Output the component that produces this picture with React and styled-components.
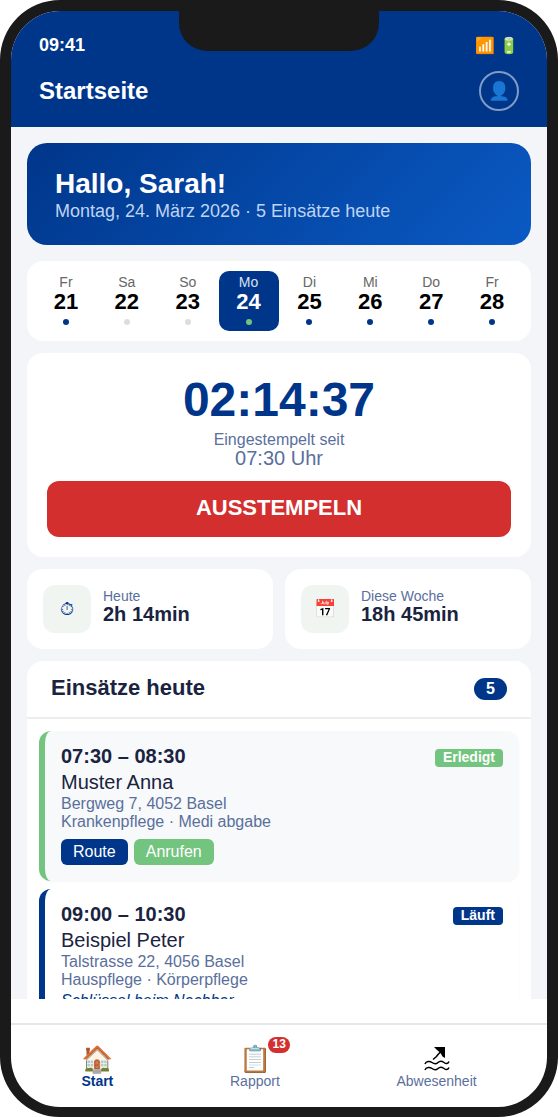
import styled, { createGlobalStyle } from "styled-components";

const tage = [
  { tag: "Fr", nummer: 21, punkt: "#00368a" },
  { tag: "Sa", nummer: 22, punkt: "#dddddd" },
  { tag: "So", nummer: 23, punkt: "#dddddd" },
  { tag: "Mo", nummer: 24, punkt: "#72c47e", aktiv: true },
  { tag: "Di", nummer: 25, punkt: "#00368a" },
  { tag: "Mi", nummer: 26, punkt: "#00368a" },
  { tag: "Do", nummer: 27, punkt: "#00368a" },
  { tag: "Fr", nummer: 28, punkt: "#00368a" },
];

const einsaetze = [
  {
    zeit: "07:30 – 08:30",
    name: "Muster Anna",
    adresse: "Bergweg 7, 4052 Basel",
    leistung: "Krankenpflege · Medi abgabe",
    status: "Erledigt",
    farbe: "#72c47e",
    fertig: true,
  },
  {
    zeit: "09:00 – 10:30",
    name: "Beispiel Peter",
    adresse: "Talstrasse 22, 4056 Basel",
    leistung: "Hauspflege · Körperpflege",
    notiz: "Schlüssel beim Nachbar",
    status: "Läuft",
    farbe: "#00368a",
  },
];

function StrandIcon() {
  return (
    <svg width="26" height="24" viewBox="0 0 26 24" fill="none" aria-hidden="true">
      <path d="M10 0H21V11L18.5 9.5L16.5 6L12.5 2.5Z" fill="#000000" />
      <path d="M17 4.5L14 7.5L12.5 9.5L9 12.5" stroke="#000000" strokeWidth="1.5" />
      <path
        d="M1 17C2 14 6 14 8 15.5S12 17.5 14 15.5S18 14 20 15.5S24 17 25 14.5M1 23C2 20 6 20 8 21.5S12 23.5 14 21.5S18 20 20 21.5S24 23 25 20.5"
        stroke="#000000"
        strokeWidth="1.5"
      />
    </svg>
  );
}

function Einsatz({ einsatz }) {
  return (
    <EinsatzKarte $farbe={einsatz.farbe} $fertig={einsatz.fertig}>
      <EinsatzKopf>
        <Zeit>{einsatz.zeit}</Zeit>
        <Status $farbe={einsatz.farbe}>{einsatz.status}</Status>
      </EinsatzKopf>
      <Name>{einsatz.name}</Name>
      <Detail>{einsatz.adresse}</Detail>
      <Detail>{einsatz.leistung}</Detail>
      {einsatz.notiz && <Notiz>{einsatz.notiz}</Notiz>}
      <Aktionen>
        <Aktion $farbe="#00368a">Route</Aktion>
        <Aktion $farbe="#72c47e">Anrufen</Aktion>
      </Aktionen>
    </EinsatzKarte>
  );
}

export default function App() {
  return (
    <>
      <GlobalStyle />
      <Telefon>
        <Notch />
        <Kopf>
          <StatusLeiste>
            <span>09:41</span>
            <Signale>📶 🔋</Signale>
          </StatusLeiste>
          <TitelZeile>
            <Titel>Startseite</Titel>
            <Avatar aria-label="Profil">👤</Avatar>
          </TitelZeile>
        </Kopf>

        <Inhalt>
          <Begruessung>
            <Hallo>Hallo, Sarah!</Hallo>
            <Datum>Montag, 24. März 2026 · 5 Einsätze heute</Datum>
          </Begruessung>

          <Woche>
            {tage.map((t) => (
              <Tag key={t.nummer} $aktiv={t.aktiv}>
                <TagName $aktiv={t.aktiv}>{t.tag}</TagName>
                <TagNummer>{t.nummer}</TagNummer>
                <Punkt $farbe={t.punkt} />
              </Tag>
            ))}
          </Woche>

          <Stempeluhr>
            <Timer>02:14:37</Timer>
            <Seit>Eingestempelt seit</Seit>
            <SeitZeit>07:30 Uhr</SeitZeit>
            <Ausstempeln>AUSSTEMPELN</Ausstempeln>
          </Stempeluhr>

          <Statistik>
            <StatKarte>
              <StatIcon>⏱</StatIcon>
              <div>
                <StatLabel>Heute</StatLabel>
                <StatWert>2h 14min</StatWert>
              </div>
            </StatKarte>
            <StatKarte>
              <StatIcon>📅</StatIcon>
              <div>
                <StatLabel>Diese Woche</StatLabel>
                <StatWert>18h 45min</StatWert>
              </div>
            </StatKarte>
          </Statistik>

          <Liste>
            <ListenKopf>
              <ListenTitel>Einsätze heute</ListenTitel>
              <Anzahl>5</Anzahl>
            </ListenKopf>
            <ListenInhalt>
              {einsaetze.map((e) => (
                <Einsatz key={e.zeit} einsatz={e} />
              ))}
            </ListenInhalt>
          </Liste>
        </Inhalt>

        <Navigation>
          <NavLink href="#start" $aktiv>
            <NavIcon>🏠</NavIcon>
            Start
          </NavLink>
          <NavLink href="#rapport">
            <NavIcon>📋</NavIcon>
            Rapport
            <NavBadge>13</NavBadge>
          </NavLink>
          <NavLink href="#abwesenheit">
            <NavIcon>
              <StrandIcon />
            </NavIcon>
            Abwesenheit
          </NavLink>
        </Navigation>
      </Telefon>
    </>
  );
}

const GlobalStyle = createGlobalStyle`
  * {
    box-sizing: border-box;
  }
  body {
    margin: 0;
    background: #ffffff;
    font-family: "Liberation Sans", Arial, sans-serif;
  }
  h1, h2, h3, p {
    margin: 0;
  }
  button {
    font-family: inherit;
    border: none;
    padding: 0;
    cursor: pointer;
  }
`;

const Telefon = styled.div`
  position: relative;
  display: flex;
  flex-direction: column;
  height: 100vh;
  border: 11px solid #1a1a1a;
  border-bottom-width: 10px;
  border-radius: 60px;
  background: #ffffff;
  overflow: hidden;
`;

const Notch = styled.div`
  position: absolute;
  top: 0;
  left: 50%;
  width: 200px;
  height: 40px;
  margin-left: -100px;
  background: #1a1a1a;
  border-radius: 0 0 28px 28px;
`;

const Kopf = styled.header`
  flex-shrink: 0;
  padding: 24px 28px 16px;
  background: #00368a;
  color: #ffffff;
`;

const StatusLeiste = styled.div`
  display: flex;
  justify-content: space-between;
  align-items: center;
  height: 20px;
  margin-bottom: 16px;
  font-size: 18px;
  font-weight: 700;
`;

const Signale = styled.span`
  font-size: 16px;
`;

const TitelZeile = styled.div`
  display: flex;
  justify-content: space-between;
  align-items: center;
`;

const Titel = styled.h1`
  font-size: 24px;
  line-height: 28px;
`;

const Avatar = styled.button`
  display: flex;
  align-items: center;
  justify-content: center;
  width: 40px;
  height: 40px;
  border: 2px solid #809bc5;
  border-radius: 50%;
  background: transparent;
  font-size: 18px;
`;

const Inhalt = styled.main`
  flex: 1;
  min-height: 0;
  padding: 16px;
  background: #f3f5f9;
  overflow-y: auto;
  scrollbar-width: none;
`;

const Begruessung = styled.section`
  padding: 24px 28px;
  margin-bottom: 16px;
  border-radius: 20px;
  background: linear-gradient(135deg, #00368a, #0a5ac4);
  color: #ffffff;
`;

const Hallo = styled.h2`
  font-size: 28px;
  line-height: 34px;
`;

const Datum = styled.p`
  font-size: 18px;
  line-height: 20px;
  color: #bfd4f2;
`;

const Woche = styled.section`
  display: flex;
  gap: 1px;
  padding: 10px 9px;
  margin-bottom: 12px;
  border-radius: 16px;
  background: #ffffff;
`;

const Tag = styled.button`
  flex: 1;
  display: flex;
  flex-direction: column;
  align-items: center;
  height: 60px;
  padding-top: 3px;
  border-radius: 10px;
  background: ${(props) => (props.$aktiv ? "#00368a" : "transparent")};
  color: ${(props) => (props.$aktiv ? "#ffffff" : "#000000")};
`;

const TagName = styled.span`
  font-size: 14px;
  line-height: 16px;
  color: ${(props) => (props.$aktiv ? "#d9e2f0" : "#666666")};
`;

const TagNummer = styled.span`
  font-size: 22px;
  line-height: 24px;
  font-weight: 700;
`;

const Punkt = styled.span`
  width: 6px;
  height: 6px;
  margin-top: 5px;
  border-radius: 50%;
  background: ${(props) => props.$farbe};
`;

const Stempeluhr = styled.section`
  display: flex;
  flex-direction: column;
  align-items: center;
  padding: 20px;
  margin-bottom: 12px;
  border-radius: 16px;
  background: #ffffff;
  color: #5a6f9c;
`;

const Timer = styled.div`
  margin-bottom: 4px;
  font-size: 48px;
  line-height: 54px;
  font-weight: 700;
  color: #00368a;
`;

const Seit = styled.p`
  font-size: 16px;
  line-height: 18px;
`;

const SeitZeit = styled.p`
  font-size: 20px;
  line-height: 18px;
`;

const Ausstempeln = styled.button`
  width: 100%;
  height: 56px;
  margin-top: 14px;
  padding-bottom: 2px;
  border-radius: 12px;
  background: #d32f2f;
  color: #ffffff;
  font-size: 22px;
  font-weight: 700;
`;

const Statistik = styled.section`
  display: flex;
  gap: 12px;
  margin-bottom: 12px;
`;

const StatKarte = styled.div`
  flex: 1;
  display: flex;
  align-items: center;
  gap: 12px;
  padding: 16px;
  border-radius: 16px;
  background: #ffffff;
`;

const StatIcon = styled.div`
  display: flex;
  align-items: center;
  justify-content: center;
  width: 48px;
  height: 48px;
  border-radius: 12px;
  background: #f0f5f2;
  color: #00368a;
  font-size: 18px;
`;

const StatLabel = styled.p`
  font-size: 14px;
  line-height: 16px;
  color: #5a6f9c;
`;

const StatWert = styled.p`
  font-size: 20px;
  line-height: 20px;
  padding-bottom: 6px;
  font-weight: 700;
  color: #1a2340;
`;

const Liste = styled.section`
  border-radius: 16px;
  background: #ffffff;
`;

const ListenKopf = styled.div`
  display: flex;
  justify-content: space-between;
  align-items: center;
  height: 58px;
  padding: 0 24px;
  border-bottom: 2px solid #ebedf0;
`;

const ListenTitel = styled.h2`
  padding-bottom: 2px;
  font-size: 22px;
  line-height: 26px;
  color: #1a2340;
`;

const Anzahl = styled.span`
  padding: 0 12px;
  border-radius: 11px;
  background: #00368a;
  color: #ffffff;
  font-size: 16px;
  line-height: 22px;
  font-weight: 700;
`;

const ListenInhalt = styled.div`
  display: flex;
  flex-direction: column;
  gap: 8px;
  padding: 12px;
`;

const EinsatzKarte = styled.article`
  padding: 14px 16px 16px;
  border-left: 6px solid ${(props) => props.$farbe};
  border-radius: 12px;
  background: ${(props) => (props.$fertig ? "#f7f9fa" : "#ffffff")};
  box-shadow: 0 1px 2px rgba(0, 0, 0, 0.03);
`;

const EinsatzKopf = styled.div`
  display: flex;
  justify-content: space-between;
  align-items: flex-end;
  margin-bottom: 2px;
`;

const Zeit = styled.h3`
  font-size: 20px;
  line-height: 22px;
  color: #1a2340;
`;

const Status = styled.span`
  padding: 0 8px 2px;
  border-radius: 4px;
  background: ${(props) => props.$farbe};
  color: #ffffff;
  font-size: 14px;
  line-height: 16px;
  font-weight: 700;
`;

const Name = styled.p`
  font-size: 20px;
  line-height: 26px;
  color: #1a2340;
`;

const Detail = styled.p`
  font-size: 16px;
  line-height: 18px;
  color: #5a6f9c;
`;

const Notiz = styled.p`
  margin-top: 2px;
  font-size: 16px;
  line-height: 20px;
  font-style: italic;
  color: #00368a;
`;

const Aktionen = styled.div`
  display: flex;
  gap: 6px;
  margin-top: 8px;
`;

const Aktion = styled.button`
  height: 26px;
  padding: 0 12px;
  border-radius: 6px;
  background: ${(props) => props.$farbe};
  color: #ffffff;
  font-size: 16px;
`;

const Navigation = styled.nav`
  display: flex;
  justify-content: space-around;
  flex-shrink: 0;
  margin-top: 24px;
  padding: 20px 12px 18px;
  border-top: 2px solid #e5e7ea;
`;

const NavLink = styled.a`
  position: relative;
  display: flex;
  flex-direction: column;
  align-items: center;
  font-size: 14px;
  line-height: 16px;
  font-weight: ${(props) => (props.$aktiv ? 700 : 400)};
  color: ${(props) => (props.$aktiv ? "#00368a" : "#5a6f9c")};
  text-decoration: none;
`;

const NavIcon = styled.span`
  display: flex;
  align-items: center;
  height: 28px;
  font-size: 26px;
  line-height: 28px;
  font-weight: 400;
`;

const NavBadge = styled.span`
  position: absolute;
  top: -8px;
  right: -10px;
  padding: 0 4px 2px;
  border-radius: 10px;
  background: #d32f2f;
  color: #ffffff;
  font-size: 12px;
  line-height: 14px;
  font-weight: 700;
`;
